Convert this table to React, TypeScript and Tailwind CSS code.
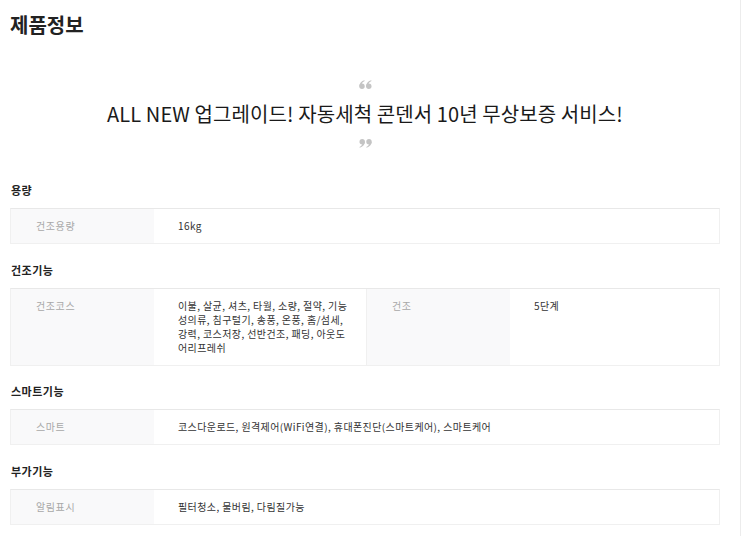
import React from "react";

const font = { fontFamily: '"Noto Sans CJK KR", "Noto Sans", sans-serif' };

function QuoteMark({ close = false }: { close?: boolean }) {
  const mark = (
    <>
      <circle cx="3" cy="6.2" r="2.7" />
      <path d="M0.3 6.4 C0.3 3.2 2.4 1.0 5.4 0.2 L5.7 1.1 C3.8 1.9 2.7 3.3 2.7 4.8 Z" />
    </>
  );
  return (
    <svg width="13" height="9" viewBox="0 0 13 9" fill="#c4c4c4" className="block">
      <g transform={close ? "rotate(180 6.5 4.5)" : undefined}>
        <g>{mark}</g>
        <g transform="translate(6.8 0)">{mark}</g>
      </g>
    </svg>
  );
}

function Label({ children, className = "" }: { children: React.ReactNode; className?: string }) {
  return (
    <div className={"w-[143px] shrink-0 bg-[#f9f9fa] pl-[25px] pt-[10px] pb-[10px] text-[10px] leading-[14px] tracking-[0.6px] text-[#a8a8a8] " + className}>
      {children}
    </div>
  );
}

function Value({ children, className = "" }: { children: React.ReactNode; className?: string }) {
  return (
    <div className={"pl-[24px] pr-[12px] pt-[10px] pb-[10px] text-[10px] leading-[14px] tracking-[0.4px] text-[#333]" + " " + className}>
      {children}
    </div>
  );
}

function Section({ title, children, className = "" }: { title: string; children: React.ReactNode; className?: string }) {
  return (
    <div className={className}>
      <div className="pl-[1px] text-[11px] leading-[16px] font-bold tracking-[0.5px] text-[#222]">{title}</div>
      <div className="mt-[10px] flex border border-[#f0f0f0] border-t-[#e8e8e8]">{children}</div>
    </div>
  );
}

export default function App() {
  return (
    <div className="w-[743px] h-[536px] bg-white flex overflow-hidden" style={font}>
      <div className="w-[740px] pl-[10px] pr-[20px] pt-[11px]">
        <div className="text-[20px] leading-[28px] font-bold text-[#222]">제품정보</div>
        <div className="flex flex-col items-center">
          <div className="mt-[41px] h-[20px] flex items-start justify-center">
            <QuoteMark />
          </div>
          <div className="h-[28px] leading-[28px] text-[20px] tracking-[0.1px] text-[#1a1a1a]">
            ALL NEW 업그레이드! 자동세척 콘덴서 10년 무상보증 서비스!
          </div>
          <div className="mt-[11px] h-[20px] flex items-start justify-center">
            <QuoteMark close />
          </div>
        </div>

        <Section title="용량" className="mt-[23px]">
          <Label>건조용량</Label>
          <Value className="flex-1">16kg</Value>
        </Section>

        <Section title="건조기능" className="mt-[18px]">
          <Label>건조코스</Label>
          <Value className="w-[212px] shrink-0">
            이불, 살균, 셔츠, 타월, 소량, 절약, 기능성의류, 침구털기, 송풍, 온풍, 홈/섬세, 강력, 코스저장, 선반건조, 패딩, 아웃도어리프레쉬
          </Value>
          <Label className="w-[144px] border-l border-[#f0f0f0] pl-[20px]">건조</Label>
          <Value className="flex-1">5단계</Value>
        </Section>

        <Section title="스마트기능" className="mt-[17px]">
          <Label>스마트</Label>
          <Value className="flex-1">코스다운로드, 원격제어(WiFi연결), 휴대폰진단(스마트케어), 스마트케어</Value>
        </Section>

        <Section title="부가기능" className="mt-[18px]">
          <Label>알림표시</Label>
          <Value className="flex-1">필터청소, 물버림, 다림질가능</Value>
        </Section>
      </div>
      <div className="w-[3px] border-l border-[#ececec]" />
    </div>
  );
}
